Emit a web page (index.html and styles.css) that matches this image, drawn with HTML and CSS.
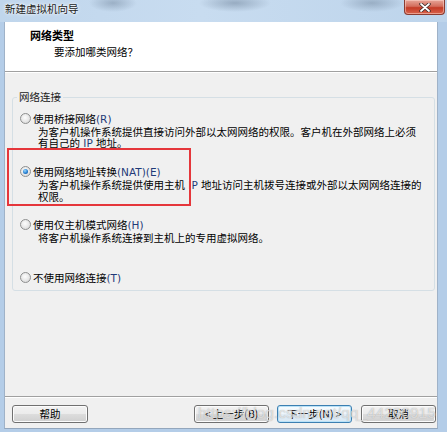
FILE: index.html
```html
<!DOCTYPE html>
<html lang="zh-CN">
<head>
    <meta charset="UTF-8">
    <title>新建虚拟机向导</title>
    <link rel="stylesheet" href="styles.css">
</head>
<body>
    <div class="window">
        <div class="titlebar">
            <span class="title">新建虚拟机向导</span>
            <span class="close-btn">
                <svg width="14" height="9" viewBox="0 0 14 9">
                    <path d="M3 1 L11 8 M11 1 L3 8" stroke="#3b2a28" stroke-width="3.4" stroke-linecap="round"/>
                    <path d="M3 1 L11 8 M11 1 L3 8" stroke="#ffffff" stroke-width="1.8" stroke-linecap="round"/>
                </svg>
            </span>
        </div>
        <div class="frame-body">
            <div class="client">
                <div class="header">
                    <div class="header-title">网络类型</div>
                    <div class="header-sub">要添加哪类网络？</div>
                </div>
                <div class="main">
                    <fieldset class="group">
                        <legend>网络连接</legend>
                        <div class="options">
                            <div class="option">
                                <div class="option-label"><span class="radio"></span>使用桥接网络<span class="lat">(R)</span></div>
                                <div class="option-desc">为客户机操作系统提供直接访问外部以太网网络的权限。客户机在外部网络上必须<br>有自己的<span class="lat"> IP </span>地址。</div>
                            </div>
                            <div class="option">
                                <div class="option-label"><span class="radio checked"></span>使用网络地址转换<span class="lat">(NAT)(E)</span></div>
                                <div class="option-desc">为客户机操作系统提供使用主机<span class="lat"> IP </span>地址访问主机拨号连接或外部以太网网络连接的<br>权限。</div>
                            </div>
                            <div class="option">
                                <div class="option-label"><span class="radio"></span>使用仅主机模式网络<span class="lat">(H)</span></div>
                                <div class="option-desc">将客户机操作系统连接到主机上的专用虚拟网络。</div>
                            </div>
                            <div class="option">
                                <div class="option-label"><span class="radio"></span>不使用网络连接<span class="lat">(T)</span></div>
                            </div>
                        </div>
                    </fieldset>
                </div>
                <div class="footer">
                    <button class="btn btn-help">帮助</button>
                    <button class="btn btn-back">&lt; 上一步(B)</button>
                    <button class="btn btn-next">下一步(N) &gt;</button>
                    <button class="btn btn-cancel">取消</button>
                </div>
            </div>
        </div>

        <!-- annotation + watermark sit on top of the dialog -->
        <div class="highlight"></div>
        <div class="watermark">https://blog.csdn.net/qq_44290915</div>
    </div>
</body>
</html>
```

FILE: styles.css
```css
* {
    margin: 0;
    padding: 0;
    box-sizing: border-box;
}

body {
    font-family: "Noto Sans CJK SC", "Microsoft YaHei", sans-serif;
    font-size: 10.5px;
    color: #000;
    background-color: #b9d1ea;
}

.window {
    position: relative;
    width: 447px;
    height: 432px;
    display: flex;
    flex-direction: column;
    background-color: #b4cde8;
    overflow: hidden;
}

.titlebar {
    height: 22px;
    display: flex;
    align-items: flex-start;
    padding: 2px 2px 0 5px;
    background:
        radial-gradient(ellipse 24px 9px at 113px 3px, rgba(105, 125, 148, 0.45), transparent),
        radial-gradient(ellipse 36px 9px at 235px 3px, rgba(105, 125, 148, 0.5), transparent),
        radial-gradient(ellipse 32px 9px at 372px 3px, rgba(105, 125, 148, 0.45), transparent),
        linear-gradient(to right, #c0d6ec, #c8dcf0 45%, #bdd4eb);
}

.title {
    line-height: 14px;
    color: #1a1a1a;
    text-shadow: 0 0 4px #fff, 0 0 2px #fff;
}

.close-btn {
    margin-left: auto;
    margin-top: -2px;
    width: 41px;
    height: 15px;
    display: flex;
    align-items: center;
    justify-content: center;
    border: 1px solid #8a3b30;
    border-top: none;
    border-radius: 0 0 4px 4px;
    background: linear-gradient(#e7a598, #d36e5d 45%, #c43b26 55%, #d8634c);
    box-shadow: inset 0 0 0 1px rgba(255, 220, 210, 0.5);
}

.frame-body {
    flex: 1;
    padding: 0 9px 3px 4px;
}

.client {
    height: 100%;
    display: flex;
    flex-direction: column;
    background-color: #f0f0f0;
    border-left: 1px solid #9fb2c8;
    border-right: 1px solid #9fb2c8;
    border-bottom: 1px solid #93a6bc;
}

.header {
    height: 50px;
    padding-top: 6px;
    background-color: #fff;
    border-bottom: 1px solid #a0a0a0;
    box-shadow: 0 1px 0 #fff;
}

.header-title {
    padding-left: 25px;
    line-height: 14px;
    font-size: 11px;
    font-weight: bold;
}

.header-sub {
    padding-left: 49px;
    margin-top: 3px;
    line-height: 14px;
}

.main {
    flex: 1;
}

.group {
    margin: 18px 2px 0 7px;
    padding: 0 0 5px 0;
    border: 1px solid #d5dfe5;
    border-radius: 3px;
}

.group legend {
    margin-left: 4px;
    padding: 0 2px;
    line-height: 14px;
    color: #1a1a1a;
}

.options {
    padding: 7px 0 0 7px;
}

.option {
    height: 53px;
}

.option:last-child {
    height: auto;
}

.option-label {
    display: flex;
    align-items: center;
    height: 15px;
    white-space: pre;
}

.radio {
    position: relative;
    flex: none;
    width: 11px;
    height: 11px;
    margin-right: 2px;
    border: 1px solid #8e8f8f;
    border-radius: 50%;
    background: radial-gradient(circle at 45% 40%, #fdfdfd 0, #e4e4e4 60%, #cfcfcf 100%);
}

.radio.checked::after {
    content: "";
    position: absolute;
    left: 2px;
    top: 2px;
    width: 5px;
    height: 5px;
    border-radius: 50%;
    background: radial-gradient(circle at 40% 35%, #9bd8ff 0, #2580d2 55%, #0d3f86 100%);
}

.lat {
    font-family: "DejaVu Sans", sans-serif;
    font-size: 10.5px;
    color: #1f3a78;
}

.option-desc {
    margin-left: 18px;
    line-height: 11px;
    white-space: pre;
}

.footer {
    height: 32px;
    display: flex;
    align-items: flex-start;
    padding: 8px 1px 0 7px;
    border-top: 1px solid #a0a0a0;
    box-shadow: inset 0 1px 0 #fff;
}

.btn {
    width: 75px;
    height: 18px;
    font-family: inherit;
    font-size: 10.5px;
    line-height: 14px;
    color: #000;
    border: 1px solid #707070;
    border-radius: 3px;
    background: linear-gradient(#f2f2f2, #ebebeb 50%, #dddddd 50%, #cfcfcf);
    box-shadow: inset 0 0 0 1px #fcfcfc;
}

.btn-help {
    width: 76px;
}

.btn-back {
    margin-left: auto;
}

.btn-next {
    margin-left: 8px;
    border-color: #3c7fb1;
    background: linear-gradient(#f6fbfe, #eef6fc 50%, #e3eef7 50%, #d8e8f4);
    box-shadow: inset 0 0 0 1px #b9e2f8;
}

.btn-cancel {
    margin-left: 9px;
}

.highlight {
    position: absolute;
    left: 7px;
    top: 148px;
    width: 184px;
    height: 58px;
    border: 2px solid #e5363b;
}

.watermark {
    position: absolute;
    left: 198px;
    top: 405px;
    font-family: "Liberation Sans", Arial, sans-serif;
    font-size: 15.5px;
    line-height: 16px;
    color: rgba(255, 255, 255, 0.6);
    text-shadow: 0 0 1px rgba(90, 90, 90, 0.5);
    white-space: nowrap;
}
```
